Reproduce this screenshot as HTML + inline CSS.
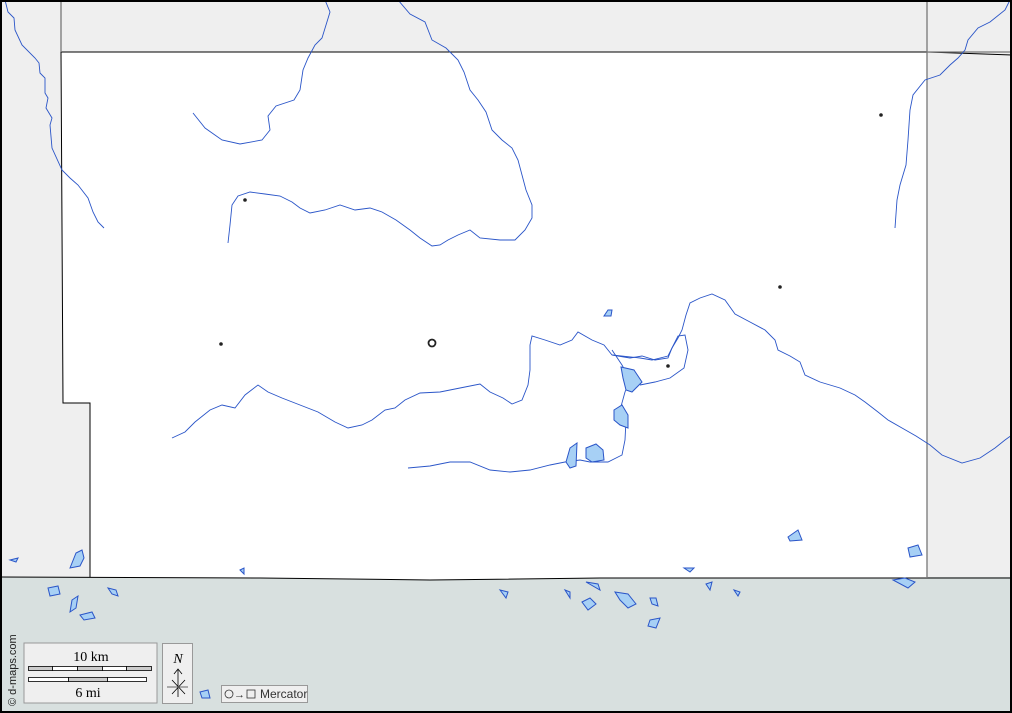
<!DOCTYPE html>
<html><head><meta charset="utf-8"><style>
html,body{margin:0;padding:0;background:#fff}
svg{display:block}
</style></head><body>
<svg width="1012" height="713" viewBox="0 0 1012 713" xmlns="http://www.w3.org/2000/svg">
<rect x="0" y="0" width="1012" height="713" fill="#efefef"/>
<rect x="0" y="577" width="1012" height="136" fill="#d8e0df"/>
<path d="M61,52 L927,52 L927,578 L600,578 L430,580 L260,578 L90,577 L90,403 L63,403 Z" fill="#fff"/>
<g fill="none" stroke="#000" stroke-width="1">
<path d="M61,52 L927,52 L1012,55"/>
<path d="M61,52 L63,403 L90,403 L90,577"/>
<path d="M0,577 L260,578 L430,580 L600,578 L927,578 L1012,578"/>
</g>
<g fill="none" stroke="#777" stroke-width="1.3">
<path d="M61,0 L61,52"/>
<path d="M927,0 L927,578"/>
<path d="M927,52 L1010,52"/>
</g>
<g fill="none" stroke="#2a55c8" stroke-width="0.9">
<path d="M5,0 L8,12 L14,18 L15,30 L22,45 L35,58 L39,63 L40,73 L45,78 L45,93 L48,98 L46,108 L52,118 L50,125 L52,148 L62,170 L70,178 L78,185 L88,198 L93,212 L98,222 L104,228"/>
<path d="M193,113 L205,128 L222,140 L240,144 L262,140 L270,130 L268,116 L276,106 L294,100 L300,90 L303,70 L308,58 L315,45 L322,38 L326,25 L330,12 L325,0"/>
<path d="M398,0 L410,14 L425,22 L432,40 L446,48 L458,60 L464,72 L470,90 L478,100 L486,112 L492,130 L502,140 L512,148 L518,160 L522,175 L526,190 L532,205 L532,218 L525,230 L515,240 L500,240 L480,238 L470,230 L458,235 L448,240 L440,245 L432,246 L420,238 L410,230 L396,220 L382,212 L370,208 L355,210 L340,205 L325,210 L310,213 L300,208 L292,202 L280,196 L265,194 L250,192 L238,196 L232,205 L230,225 L228,243"/>
<path d="M172,438 L185,432 L195,422 L210,410 L222,405 L235,408 L245,395 L258,385 L268,392 L282,398 L300,405 L318,412 L335,422 L348,428 L362,425 L372,420 L385,410 L395,408 L405,400 L420,393 L440,392 L460,388 L480,384 L490,392 L503,398 L512,404 L522,400 L528,385 L530,370 L530,345 L532,336 L545,340 L560,345 L572,340 L578,332 L592,340 L604,345 L612,355 L618,356 L630,358 L642,356 L655,360 L668,358 L672,348 L678,338 L682,330 L686,315 L690,303 L700,298 L712,294 L725,300 L735,314 L750,322 L765,330 L775,340 L778,350 L790,356 L800,362 L805,375 L820,382 L840,388 L855,395 L865,402 L878,412 L888,420 L902,428 L916,436 L930,445 L942,455 L962,463 L980,458 L995,448 L1005,440 L1012,435"/>
<path d="M612,350 L622,365 L630,380 L625,392 L620,410 L626,420 L625,440 L622,455 L608,462 L590,462 L580,460 L565,462 L550,465 L530,470 L510,472 L490,470 L470,462 L450,462 L430,466 L408,468"/>
<path d="M612,355 L640,358 L652,360 L668,356 L672,348 L678,336 L685,335 L688,350 L684,368 L670,378 L655,382 L640,385"/>
<path d="M895,228 L897,200 L900,185 L906,165 L908,140 L910,110 L913,95 L925,80 L940,75 L950,65 L958,58 L965,50 L968,40 L978,28 L990,22 L1005,10 L1010,0"/>
</g>
<g fill="#a7d0f5" stroke="#2a55c8" stroke-width="1">
<path d="M621,367 L634,370 L642,382 L632,392 L626,390 L623,378 Z"/>
<path d="M614,410 L622,405 L628,415 L628,428 L620,425 L614,420 Z"/>
<path d="M586,448 L596,444 L603,450 L604,460 L592,462 L586,458 Z"/>
<path d="M570,448 L577,443 L576,466 L570,468 L566,462 Z"/>
<path d="M608,310 L612,310 L611,316 L604,316 Z"/>
<path d="M70,568 L76,553 L82,550 L84,558 L80,566 Z"/>
<path d="M788,537 L798,530 L802,540 L790,541 Z"/>
<path d="M908,548 L918,545 L922,555 L910,557 Z"/>
<path d="M893,580 L905,578 L915,582 L908,588 Z"/>
<path d="M48,588 L58,586 L60,594 L50,596 Z"/>
<path d="M72,600 L78,596 L76,608 L70,612 Z"/>
<path d="M80,615 L92,612 L95,618 L84,620 Z"/>
<path d="M108,588 L116,590 L118,596 L112,594 Z"/>
<path d="M582,602 L590,598 L596,604 L588,610 Z"/>
<path d="M615,592 L628,594 L636,604 L628,608 L620,600 Z"/>
<path d="M650,620 L660,618 L656,628 L648,626 Z"/>
<path d="M163,700 L170,690 L180,690 L182,700 L170,702 Z"/>
<path d="M200,692 L208,690 L210,698 L202,698 Z"/>
<path d="M10,560 L18,558 L16,562 Z"/>
<path d="M240,570 L244,568 L244,574 Z"/>
<path d="M684,568 L694,568 L690,572 Z"/>
<path d="M500,590 L508,592 L506,598 Z"/>
<path d="M586,582 L598,584 L600,590 Z"/>
<path d="M650,598 L656,598 L658,606 L652,604 Z"/>
<path d="M706,584 L712,582 L710,590 Z"/>
<path d="M734,590 L740,592 L738,596 Z"/>
<path d="M565,590 L570,592 L570,598 Z"/>
</g>
<g fill="#222">
<circle cx="245" cy="200" r="1.8"/>
<circle cx="881" cy="115" r="1.8"/>
<circle cx="780" cy="287" r="1.8"/>
<circle cx="668" cy="366" r="1.8"/>
<circle cx="221" cy="344" r="1.8"/>
</g>
<circle cx="432" cy="343" r="3.5" fill="none" stroke="#222" stroke-width="1.8"/>
<rect x="24" y="643" width="133" height="60" fill="#efefef" stroke="#999"/>
<text x="91" y="661" style="font-family:'Liberation Serif',serif;font-size:14px" text-anchor="middle" fill="#000">10 km</text>
<g stroke="#000" stroke-width="0.8">
<rect x="28.5" y="666.5" width="24" height="4" fill="#ccc"/>
<rect x="52.5" y="666.5" width="25" height="4" fill="#fff"/>
<rect x="77.5" y="666.5" width="25" height="4" fill="#ccc"/>
<rect x="102.5" y="666.5" width="24" height="4" fill="#fff"/>
<rect x="126.5" y="666.5" width="25" height="4" fill="#ccc"/>
<rect x="28.5" y="677.5" width="40" height="4" fill="#fff"/>
<rect x="68.5" y="677.5" width="39" height="4" fill="#ccc"/>
<rect x="107.5" y="677.5" width="39" height="4" fill="#fff"/>
</g>
<text x="88" y="697" style="font-family:'Liberation Serif',serif;font-size:14px" text-anchor="middle" fill="#000">6 mi</text>
<rect x="162.5" y="643.5" width="30" height="60" fill="#efefef" stroke="#999"/>
<text x="178" y="663" style="font-family:'Liberation Serif',serif;font-style:italic;font-size:14px" text-anchor="middle">N</text>
<path d="M178,670 L178,697 M174,674 L178,669 L182,674 M172,680 L185,694 M172,694 L185,680" stroke="#000" stroke-width="0.8" fill="none"/>
<path d="M167,687 L188,687" stroke="#666" stroke-width="1"/>
<rect x="221.5" y="685.5" width="86" height="17" fill="#efefef" stroke="#999"/>
<circle cx="229" cy="694" r="4" fill="none" stroke="#333" stroke-width="0.8"/>
<text x="234" y="698" style="font-family:'Liberation Sans',sans-serif;font-size:11px" fill="#333">→</text>
<rect x="247" y="690" width="8" height="8" fill="none" stroke="#333" stroke-width="0.8"/>
<text x="260" y="698" style="font-family:'Liberation Sans',sans-serif;font-size:12px" fill="#333">Mercator</text>
<text transform="translate(16,706) rotate(-90)" style="font-family:'Liberation Sans',sans-serif;font-size:11px" fill="#222">© d-maps.com</text>
<rect x="1" y="1" width="1010" height="711" fill="none" stroke="#000" stroke-width="2"/>
</svg>
</body></html>
